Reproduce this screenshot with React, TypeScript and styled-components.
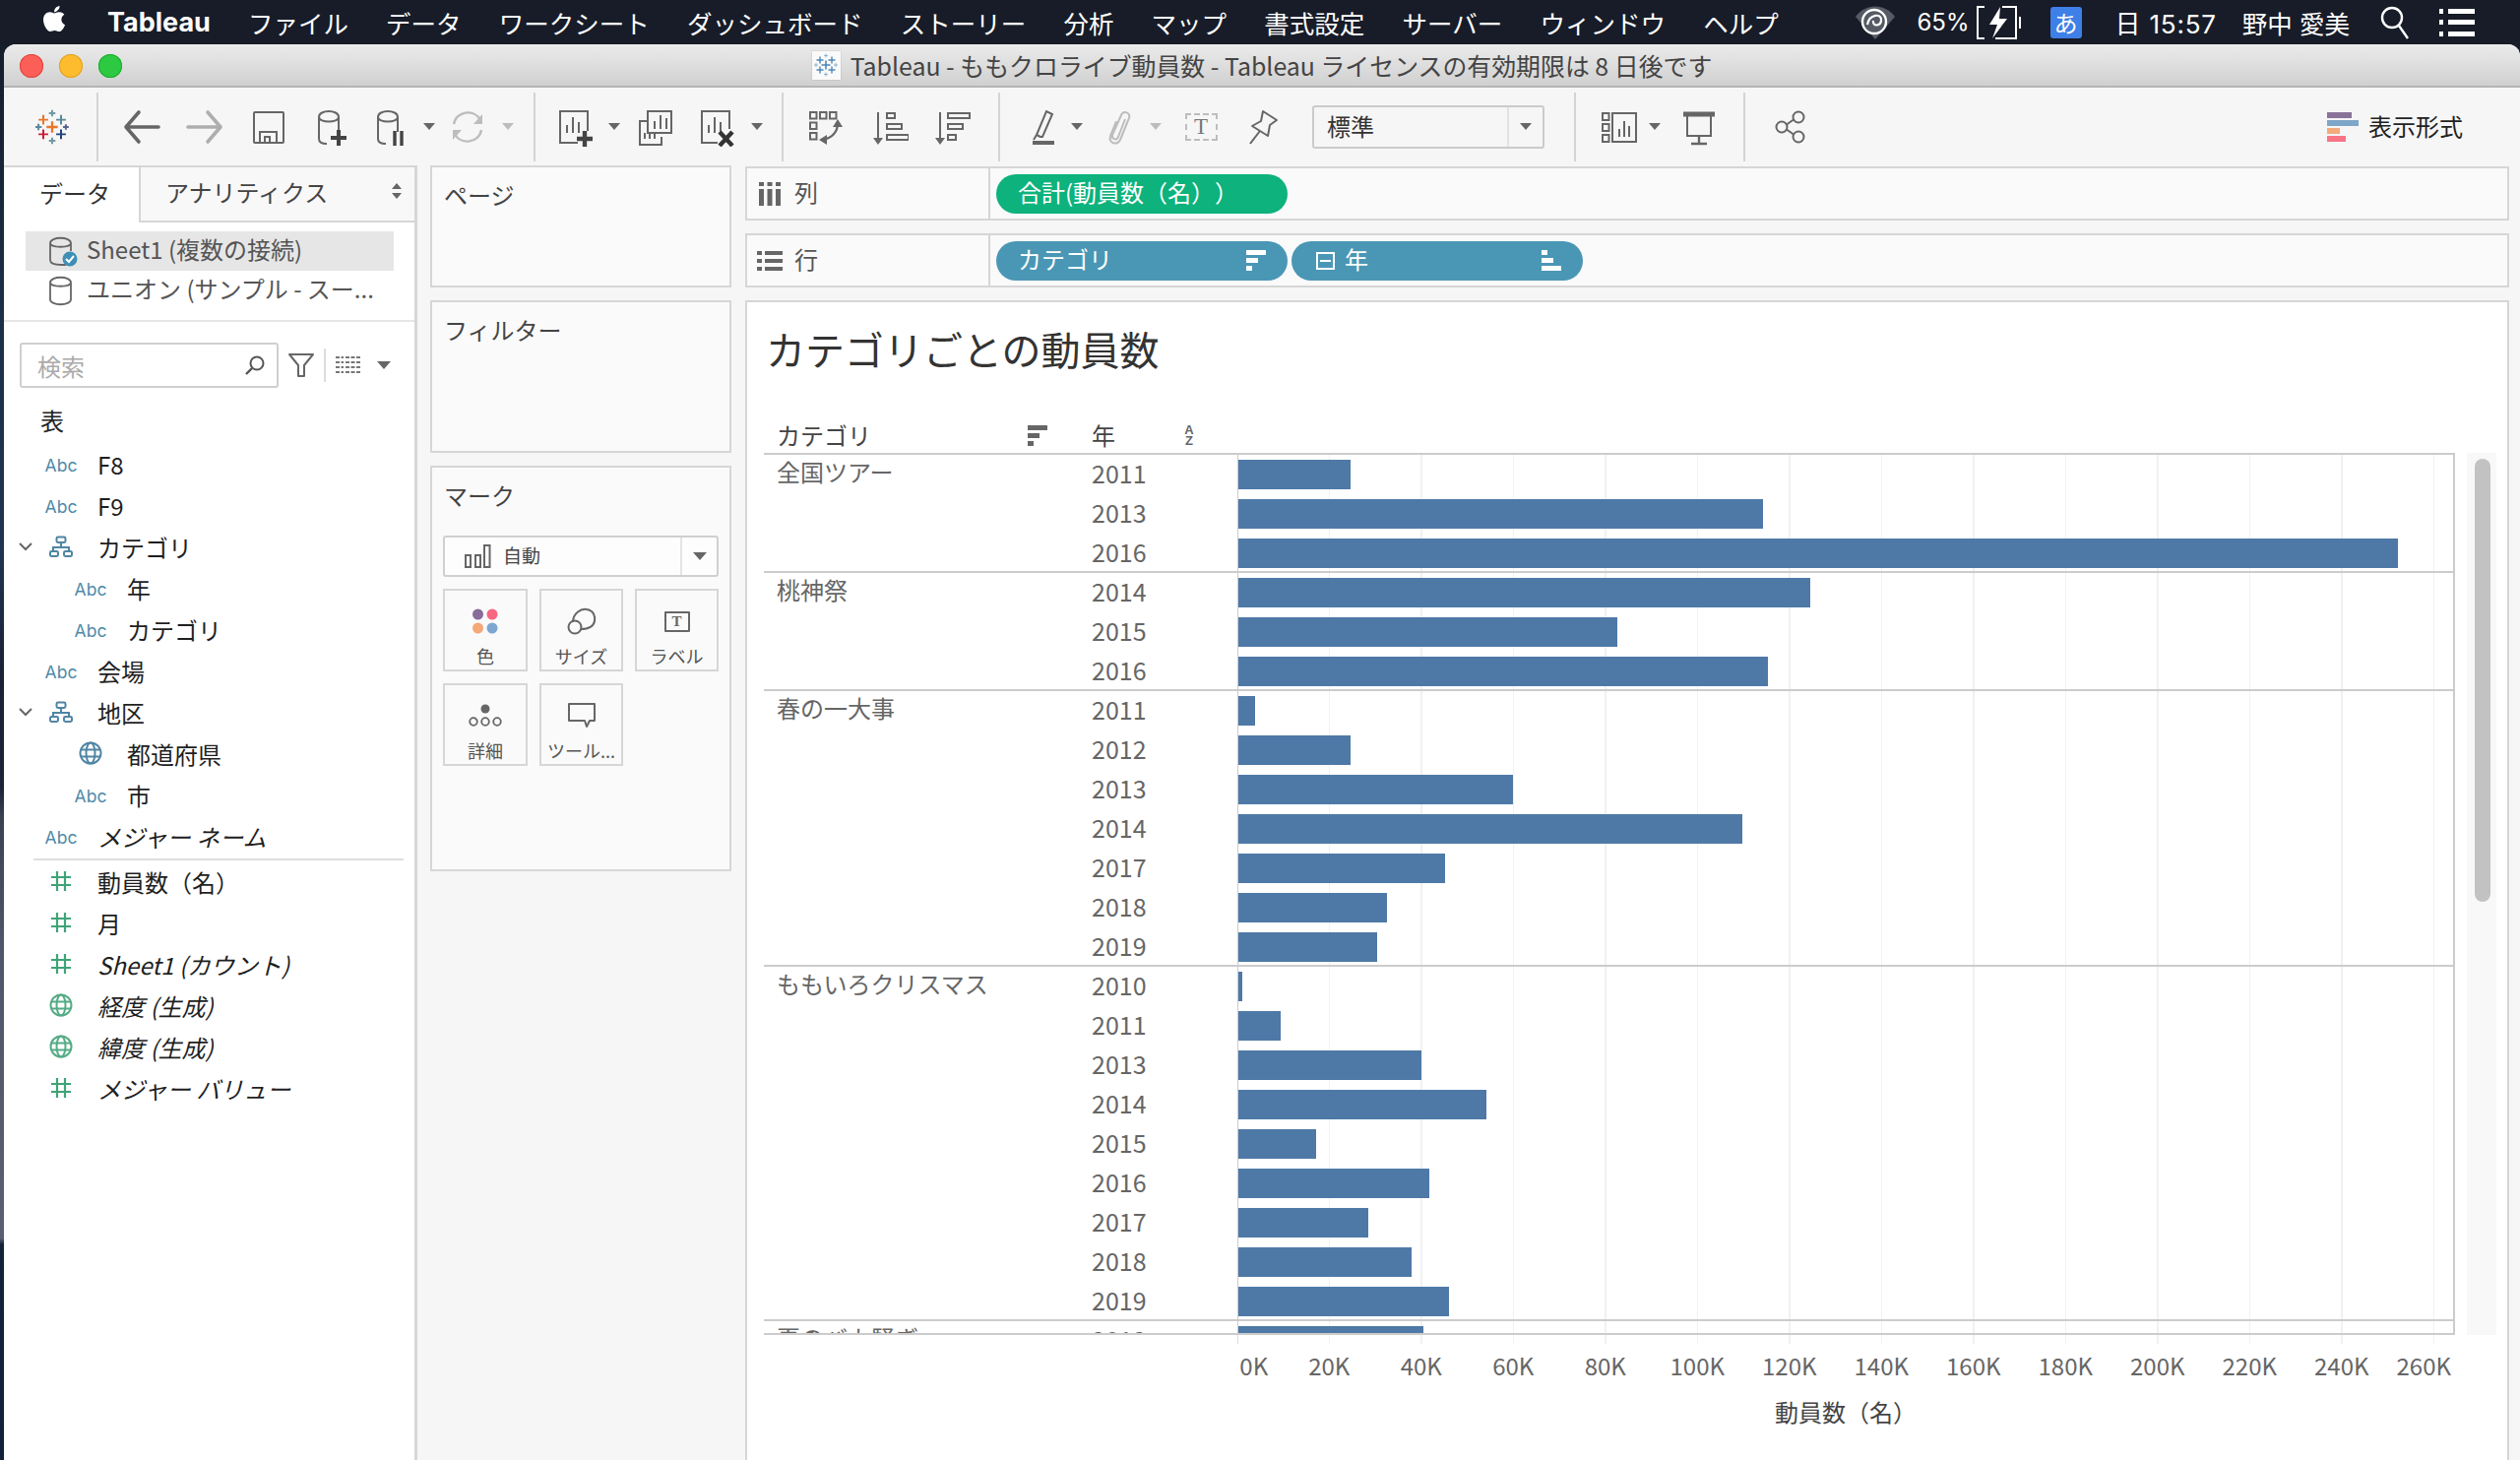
import React from "react";
import styled, { createGlobalStyle } from "styled-components";
import { FaApple } from "react-icons/fa";

const JP = `"Noto Sans CJK JP", "Noto Sans", sans-serif`;
const UI = `Inter, "Noto Sans CJK JP", sans-serif`;

const Global = createGlobalStyle`
  html, body { margin: 0; padding: 0; width: 2560px; height: 1483px; overflow: hidden; }
  body {
    font-family: ${JP};
    background: linear-gradient(180deg, #141a26 0, #1c3048 330px, #1f3450 560px, #1a2035 692px, #1c2238 800px, #3a4250 830px, #50566a 964px, #5a6070 1258px, #142238 1264px, #12203a 1483px);
  }
  #root { width: 2560px; height: 1483px; }
`;

const Page = styled.div`
  width: 2560px; height: 1483px; display: flex; flex-direction: column; overflow: hidden;
`;

/* ---------- menu bar ---------- */
const MenuBar = styled.div`
  height: 45px; flex: none; background: #171c28; color: #fff; display: flex; align-items: center;
  padding-left: 42px; font-family: ${UI}; font-size: 25.5px; box-sizing: border-box;
`;
const AppleSlot = styled.span`display: flex; width: 26px; margin-right: 41px; margin-top: -8px;`;
const AppName = styled.span`font-weight: 700; font-size: 27px; margin-right: 38px;`;
const MenuItem = styled.span`margin-right: 38.2px; white-space: nowrap; font-weight: 400;`;
const Status = styled.div`margin-left: auto; display: flex; align-items: center; padding-right: 46px;`;
const StatusText = styled.span<{ $ml: number; $fs: number; $ls?: number }>`
  margin-left: ${p => p.$ml}px; white-space: nowrap; font-size: ${p => p.$fs}px; letter-spacing: ${p => p.$ls ?? 0}px;
`;
const ImeBadge = styled.span`
  margin-left: 29px; width: 32px; height: 32px; background: #3f7fe8; border-radius: 3px; display: flex;
  align-items: center; justify-content: center; font-size: 24px;
`;
const StatusIcon = styled.svg<{ $ml: number }>`margin-left: ${p => p.$ml}px; flex: none; display: block;`;

/* ---------- window ---------- */
const Win = styled.div`
  margin-left: 4px; flex: 1; min-height: 0; display: flex; flex-direction: column; background: #f6f6f6;
  border-radius: 12px 12px 0 0; overflow: hidden;
`;
const TitleBar = styled.div`
  height: 44px; flex: none; box-sizing: border-box; display: flex; align-items: center; justify-content: center;
  background: linear-gradient(180deg, #ebebeb, #d0d0d0); border-bottom: 2px solid #b4b4b4; position: relative;
`;
const Lights = styled.div`position: absolute; left: 16px; top: 10px; display: flex; gap: 16px;`;
const Light = styled.span<{ $c: string; $b: string }>`
  width: 24px; height: 24px; border-radius: 50%; background: ${p => p.$c}; box-shadow: inset 0 0 0 1px ${p => p.$b};
`;
const TitleText = styled.span`font-size: 24.9px; color: #444; white-space: nowrap; margin-left: 10px;`;
const DocIcon = styled.span`
  width: 29px; height: 29px; background: #fafafa; box-shadow: 0 0 1px #999; display: flex; align-items: center; justify-content: center;
`;

const Toolbar = styled.div`
  height: 79px; flex: none; display: flex; align-items: center; background: #f6f6f6; padding-right: 58px;
`;
const LogoSlot = styled.div`width: 96px; padding-left: 2px; box-sizing: border-box; margin-right: -2px; display: flex; justify-content: center; flex: none;`;
const Sep = styled.span<{ $ml?: number }>`
  width: 2px; height: 70px; background: #d4d4d4; flex: none; margin-left: ${p => p.$ml ?? 0}px;
`;
const Tool = styled.span<{ $ml: number; $w?: number }>`
  width: ${p => p.$w ?? 40}px; height: 40px; flex: none; margin-left: ${p => p.$ml}px; display: flex; align-items: center; justify-content: center;
`;
const Caret = styled.span<{ $off?: boolean; $s?: number }>`
  width: 0; height: 0; border-left: ${p => p.$s ?? 6}px solid transparent; border-right: ${p => p.$s ?? 6}px solid transparent;
  border-top: ${p => (p.$s ?? 6) + 1}px solid ${p => (p.$off ? "#bdbdbd" : "#666")}; display: block;
`;
const FitBox = styled.div`
  width: 236px; height: 44px; margin-left: 31px; flex: none; box-sizing: border-box; border: 2px solid #cbcbcb; border-radius: 3px;
  display: flex; align-items: center; font-size: 24px; color: #333;
`;
const FitText = styled.span`flex: 1; padding: 0 0 3px 13px;`;
const FitArrow = styled.span`
  width: 34px; height: 100%; border-left: 2px solid #e2e2e2; display: flex; align-items: center; justify-content: center;
`;
const ShowMe = styled.div`margin-left: auto; display: flex; align-items: center; gap: 10px; font-size: 24px; color: #222;`;
const ShowMeText = styled.span`margin-top: -3px;`;
const ShowBars = styled.div`display: flex; flex-direction: column; gap: 2px;`;
const ShowBar = styled.span<{ $w: number; $c: string }>`display: block; height: 6px; width: ${p => p.$w}px; background: ${p => p.$c};`;

/* ---------- workspace ---------- */
const Workspace = styled.div`flex: 1; min-height: 0; display: flex; background: #f6f6f6;`;
const Sidebar = styled.div`
  width: 420px; flex: none; box-sizing: border-box; background: #fff; border-top: 2px solid #d6d6d6; border-right: 3px solid #d6d6d6;
  display: flex; flex-direction: column; color: #222;
`;
const Tabs = styled.div`height: 56px; flex: none; display: flex;`;
const TabOn = styled.div`
  width: 139px; box-sizing: border-box; padding: 0 0 6px 36px; font-size: 24px; color: #333; display: flex; align-items: center; border-right: 2px solid #d6d6d6;
`;
const TabOff = styled.div`
  flex: 1; box-sizing: border-box; padding: 0 12px 6px 25px; font-size: 24px; color: #444; background: #f8f8f8; border-bottom: 2px solid #d6d6d6;
  display: flex; align-items: center; justify-content: space-between;
`;
const Sources = styled.div`
  padding: 9px 0 10px; border-bottom: 2px solid #e6e6e6; display: flex; flex-direction: column; height: 101px; box-sizing: border-box; flex: none;
`;
const Source = styled.div<{ $on?: boolean }>`
  margin-left: 22px; width: 374px; height: 40px; flex: none; display: flex; align-items: center; gap: 7px; padding-left: 23px; box-sizing: border-box;
  background: ${p => (p.$on ? "#e6e6e6" : "transparent")}; color: #555; font-size: 24px; white-space: nowrap;
`;
const SourceText = styled.span`margin-top: -5px;`;
const SearchRow = styled.div`display: flex; align-items: center; height: 46px; margin: 21px 0 0 16px; flex: none;`;
const SearchBox = styled.div`
  width: 263px; height: 46px; box-sizing: border-box; border: 2px solid #cfcfcf; border-radius: 3px; padding: 0 10px 0 16px;
  display: flex; align-items: center; justify-content: space-between; color: #aaa; font-size: 24px;
`;
const SearchTools = styled.div`display: flex; align-items: center; margin-left: 9px;`;
const SmallSep = styled.span`width: 2px; height: 34px; background: #ddd; margin: 0 10px 0 9px;`;
const TableHead = styled.div`margin: 15px 0 0 37px; font-size: 24px; height: 36px; line-height: 36px; flex: none; color: #222;`;
const FieldList = styled.div`display: flex; flex-direction: column; margin-top: 5px;`;
const Field = styled.div<{ $sub?: boolean; $it?: boolean }>`
  height: 42px; flex: none; display: grid; grid-template-columns: 42px 53px auto; align-items: center;
  padding-left: ${p => (p.$sub ? 30 : 0)}px; font-size: 24px; font-style: ${p => (p.$it ? "italic" : "normal")}; white-space: nowrap; color: #1f1f1f;
`;
const Chevron = styled.svg`justify-self: end; margin-right: 13px;`;
const FieldIcon = styled.span`display: flex; justify-content: center; width: 42px; margin-left: -5px;`;
const Abc = styled.span`font-family: ${UI}; font-size: 17.5px; color: #4f8aa8; font-style: normal; margin-top: 2px;`;
const FieldRule = styled.div`height: 2px; margin: 2px 0 0 30px; width: 376px; background: #dedede; flex: none;`;

const Cards = styled.div`width: 306px; margin-left: 13px; flex: none; display: flex; flex-direction: column;`;
const Card = styled.div<{ $h: number }>`
  height: ${p => p.$h}px; flex: none; box-sizing: border-box; border: 2px solid #d6d6d6; background: #fafafa; padding: 11px 11px; margin-bottom: 13px;
`;
const CardTitle = styled.div`font-size: 24px; color: #444; height: 34px; line-height: 34px; padding-left: 1px;`;
const MarkSelect = styled.div`
  margin-top: 24px; height: 42px; box-sizing: border-box; border: 2px solid #d0d0d0; border-radius: 3px; display: flex; align-items: center; background: #fff8;
  font-size: 19px; color: #444;
`;
const MarkValue = styled.div`flex: 1; display: flex; align-items: center; gap: 12px; padding-left: 20px;`;
const MarkValueText = styled.span`margin-top: -3px;`;
const MarkArrow = styled.div`width: 35px; height: 100%; border-left: 2px solid #e4e4e4; display: flex; align-items: center; justify-content: center;`;
const MarkGrid = styled.div`margin-top: 12px; display: grid; grid-template-columns: 86px 85px 85px; column-gap: 12px; row-gap: 12px;`;
const MarkCard = styled.div`
  height: 84px; box-sizing: border-box; border: 2px solid #d6d6d6; display: flex; flex-direction: column; align-items: center; justify-content: flex-end;
  padding-bottom: 1px; font-size: 18px; color: #555; gap: 4px; white-space: nowrap;
`;
const MarkIcon = styled.div`height: 36px; display: flex; align-items: center; justify-content: center;`;
const TBox = styled.span`
  width: 26px; height: 21px; box-sizing: border-box; border: 2px solid #666; border-radius: 1px; display: flex; align-items: center; justify-content: center;
  font-family: "Liberation Serif", serif; font-size: 15px; font-weight: 700; color: #666; line-height: 1;
`;

const Right = styled.div`width: 1792px; margin-left: 14px; flex: none; display: flex; flex-direction: column;`;
const Shelf = styled.div`
  height: 55px; flex: none; box-sizing: border-box; border: 2px solid #d6d6d6; background: #fafafa; display: flex; margin-bottom: 13px;
  &:first-child { margin-top: 1px; }
`;
const ShelfLabel = styled.div`
  width: 247px; flex: none; box-sizing: border-box; border-right: 2px solid #d6d6d6; display: flex; align-items: center; padding-left: 12px; gap: 14px;
  font-size: 24px; color: #555;
`;
const ShelfText = styled.span`margin-top: -4px;`;
const ShelfBody = styled.div`display: flex; align-items: center; padding-left: 6px; gap: 4px;`;
const Pill = styled.div<{ $c: string }>`
  width: 296px; height: 40px; box-sizing: border-box; border-radius: 20px; background: ${p => p.$c}; color: #fff; display: flex; align-items: center;
  padding: 0 22px; font-size: 24px; justify-content: space-between; white-space: nowrap; text-spacing-trim: space-all;
`;
const PillText = styled.span`margin-top: -4px;`;
const PillLead = styled.span`display: flex; align-items: center; gap: 10px; margin-left: 3px;`;
const BarsIcon = styled.span<{ $rev?: boolean }>`
  display: flex; flex-direction: ${p => (p.$rev ? "column-reverse" : "column")}; gap: 3px; align-items: flex-start;
`;
const BarsLine = styled.span<{ $w: number; $c: string }>`display: block; height: 5px; width: ${p => p.$w}px; background: ${p => p.$c};`;
const RowsGlyph = styled.svg`margin: 0 -2px; flex: none;`;

const Viz = styled.div`
  flex: 1; min-height: 0; box-sizing: border-box; border: 2px solid #d6d6d6; border-bottom: none; background: #fff; padding: 19px 0 0 17px; display: flex; flex-direction: column;
`;
const VizTitle = styled.div`font-size: 40px; line-height: 56px; color: #333; margin-left: 2px; height: 56px;`;
const HeadRow = styled.div`display: flex; margin-top: 42px; height: 36px; font-size: 24px; color: #444; width: 1718px; line-height: 36px;`;
const HeadCell = styled.div<{ $w: number; $pl: number; $pr: number }>`
  width: ${p => p.$w}px; box-sizing: border-box; padding: 0 ${p => p.$pr}px 0 ${p => p.$pl}px; display: flex; justify-content: space-between; align-items: center;
`;
const ChartRow = styled.div`display: flex; align-items: stretch;`;
const ChartBody = styled.div`
  width: 1718px; height: 896px; box-sizing: border-box; border-top: 2px solid #cccccc; border-bottom: 2px solid #cccccc; border-right: 2px solid #cccccc; overflow: hidden;
  position: relative;
`;
const Group = styled.div<{ $n: number }>`
  display: flex; height: ${p => p.$n * 40}px; box-sizing: border-box; border-bottom: 2px solid #cccccc; flex: none;
`;
const CatLabel = styled.div`width: 333px; flex: none; box-sizing: border-box; padding-left: 13px; font-size: 24px; line-height: 33px; color: #666;`;
const RowsCol = styled.div`flex: 1; display: flex; flex-direction: column;`;
const gridBg = `repeating-linear-gradient(90deg, transparent 0, transparent 92px, #f1f1f1 92px, #f1f1f1 93.5px)`;
const BarRow = styled.div`
  height: 40px; flex: none; display: flex; &:last-child { height: 38px; }
`;
const YearLabel = styled.div`width: 148px; flex: none; font-size: 25px; line-height: 37px; color: #666;`;
const BarCell = styled.div`
  flex: 1; box-sizing: border-box; border-left: 1px solid #cccccc; padding-top: 5px; background: ${gridBg};
`;
const Bar = styled.div`height: 30px; background: #4e79a7;`;
const Scroll = styled.div`margin-left: 12px; width: 30px; height: 896px; background: #f8f8f8; padding: 6px 6px 0 8px; box-sizing: border-box;`;
const Thumb = styled.div`height: 450px; background: #c2c2c2; border-radius: 8px;`;
const TickStrip = styled.div`margin-left: 481px; width: 1236px; height: 9px; box-sizing: border-box; border-left: 1px solid #ddd; background: ${gridBg};`;
const Ticks = styled.div`display: flex; margin-left: 434px; height: 34px; line-height: 34px; margin-top: 5px; font-size: 24px; color: #666;`;
const Tick = styled.span<{ $shift?: number }>`
  width: 93.5px; flex: none; text-align: center; white-space: nowrap; transform: translateX(${p => p.$shift ?? 0}px);
`;
const AxisTitle = styled.div`margin: 13px 0 0 489px; width: 1220px; text-align: center; font-size: 24px; line-height: 34px; color: #444;`;

/* ---------- drawings ---------- */
const C = "#666";
const Cross = ({ x, y, s, c, w = 2.4 }: { x: number; y: number; s: number; c: string; w?: number }) => (
  <path d={`M${x - s} ${y}H${x + s}M${x} ${y - s}V${y + s}`} stroke={c} strokeWidth={w} fill="none" />
);
const Logo = () => (
  <svg width="34" height="36" viewBox="0 0 40 44">
    <Cross x={20} y={22} s={7} c="#e8762b" w={2.8} />
    <Cross x={9} y={13} s={6} c="#e8762b" />
    <Cross x={31} y={13} s={6} c="#5b879b" />
    <Cross x={9} y={31} s={6} c="#c72037" />
    <Cross x={31} y={31} s={6} c="#1f447e" />
    <Cross x={20} y={5} s={4} c="#7199a6" />
    <Cross x={20} y={39} s={4} c="#7099a6" />
    <Cross x={3} y={22} s={4} c="#5b879b" />
    <Cross x={37} y={22} s={3.5} c="#59628c" />
  </svg>
);
const MiniLogo = () => (
  <svg width="24" height="24" viewBox="0 0 24 24">
    <Cross x={12} y={12} s={4.5} c="#4e86b8" w={1.6} />
    <Cross x={6} y={7} s={3.5} c="#4e86b8" w={1.4} />
    <Cross x={18} y={7} s={3.5} c="#4e86b8" w={1.4} />
    <Cross x={6} y={17} s={3.5} c="#4e86b8" w={1.4} />
    <Cross x={18} y={17} s={3.5} c="#4e86b8" w={1.4} />
    <Cross x={12} y={2.5} s={2} c="#8db4d2" w={1} />
    <Cross x={12} y={21.5} s={2} c="#8db4d2" w={1} />
    <Cross x={2} y={12} s={2} c="#8db4d2" w={1} />
    <Cross x={22} y={12} s={2} c="#8db4d2" w={1} />
  </svg>
);
const Svg = ({ children, w = 40, h = 40 }: { children: React.ReactNode; w?: number; h?: number }) => (
  <svg width={w} height={h} viewBox={`0 0 ${w} ${h}`} fill="none" stroke={C} strokeWidth="2">{children}</svg>
);
const Arrow = ({ dir, color }: { dir: "l" | "r"; color: string }) => (
  <svg width="40" height="40" viewBox="0 0 40 40" fill="none" stroke={color} strokeWidth="3.6" strokeLinecap="round" strokeLinejoin="round">
    {dir === "l" ? <path d="M37 20H5M17 5L4 20L17 35" /> : <path d="M3 20H35M23 5L36 20L23 35" />}
  </svg>
);
const SaveIco = () => <Svg><rect x="5" y="5" width="30" height="31" rx="1" /><path d="M11 36V25H28V36M16 36V30H21V36" /></Svg>;
const Cyl = () => <path d="M9 10C9 2 29 2 29 10V25M9 10C9 16 29 16 29 10M9 10V32C9 36 13 37 17 37" />;
const AddDs = () => <Svg><Cyl /><path d="M29 23V39M21 31H37" stroke="#444" strokeWidth="4" /></Svg>;
const PauseDs = () => <Svg><Cyl /><path d="M26 24V39M33 24V39" stroke="#444" strokeWidth="3.4" /></Svg>;
const Refresh = () => (
  <svg width="40" height="40" viewBox="0 0 40 40" fill="none" stroke="#bdbdbd" strokeWidth="2.4">
    <path d="M6 17C8 4 27 1 33 13M34 23C32 36 13 39 7 27" />
    <path d="M35 7V17H26ZM5 33V23H14Z" fill="#bdbdbd" stroke="none" />
  </svg>
);
const SheetBars = () => <path d="M13 26V18M19 26V10M25 26V15" strokeWidth="2" />;
const NewSheet = () => <Svg><path d="M24 36H6V4H34V24" /><SheetBars /><path d="M31 24V40M23 32H39" stroke="#444" strokeWidth="4.4" /></Svg>;
const DupSheet = () => (
  <Svg>
    <path d="M12 4H36V26H12Z" /><path d="M19 22V14M25 22V8M31 22V11" />
    <path d="M12 14H4V38H26V30" /><path d="M9 32V26M14 32V26M19 32V26" />
  </Svg>
);
const ClearSheet = () => <Svg><path d="M22 36H6V4H34V22" /><SheetBars /><path d="M24 25L37 39M37 25L24 39" stroke="#333" strokeWidth="4.4" /></Svg>;
const SwapIco = () => (
  <Svg>
    <rect x="5" y="5" width="6.5" height="6.5" /><rect x="15" y="5" width="6.5" height="6.5" /><rect x="25" y="5" width="6.5" height="6.5" />
    <rect x="5" y="15.5" width="6.5" height="6.5" /><rect x="5" y="26" width="6.5" height="6.5" />
    <path d="M33 16C33 25 27 31 18 33" strokeWidth="2.4" />
    <path d="M33 12L38 20H28ZM14 33L22 28V38Z" fill={C} stroke="none" />
  </Svg>
);
const SortAsc = () => (
  <Svg>
    <path d="M9 5V34" /><path d="M4 31H14L9 38Z" fill={C} stroke="none" />
    <rect x="18" y="6" width="8" height="5" /><rect x="18" y="17" width="15" height="5" /><rect x="18" y="28" width="22" height="5" />
  </Svg>
);
const SortDesc = () => (
  <Svg>
    <path d="M7 5V34" /><path d="M2 31H12L7 38Z" fill={C} stroke="none" />
    <rect x="15" y="6" width="22" height="5" /><rect x="15" y="17" width="15" height="5" /><rect x="15" y="28" width="8" height="5" />
  </Svg>
);
const Highlight = () => (
  <Svg>
    <path d="M17 30L13 28L23 4L29 7L19 30Z" /><path d="M13 28L10 33" />
    <path d="M9 37H31" stroke={C} strokeWidth="4" transform="translate(0 -1)" />
  </Svg>
);
const ClipIco = () => (
  <svg width="40" height="40" viewBox="0 0 40 40" fill="none" stroke="#bdbdbd" strokeWidth="2">
    <path d="M25 12L18 30C17 34 11 33 12 28L21 8C23 3 31 5 29 11L20 33C17 39 8 37 10 29L16 14" />
  </svg>
);
const TDashed = styled.span`
  width: 33px; height: 28px; box-sizing: border-box; border: 2px dashed #bdbdbd; display: flex; align-items: center; justify-content: center;
  font-family: "Liberation Serif", serif; font-size: 23px; color: #777; line-height: 1;
`;
const PinIco = () => (
  <Svg>
    <path d="M21 4L35 13L28 18L26 29L10 19L19 14Z" strokeLinejoin="round" /><path d="M18 24L8 37" />
  </Svg>
);
const ShowIco = () => (
  <Svg>
    <rect x="3" y="6" width="6.5" height="7" /><rect x="3" y="17" width="6.5" height="7" /><rect x="3" y="28" width="6.5" height="7" />
    <rect x="13" y="6" width="24" height="29" /><path d="M20 30V22M25 30V14M30 30V19" />
  </Svg>
);
const Present = () => (
  <Svg>
    <path d="M4 7H36" strokeWidth="5" /><path d="M8 9V29H32V9" /><path d="M20 29V37M12 37H28" strokeWidth="2.4" />
  </Svg>
);
const ShareIco = () => (
  <Svg>
    <circle cx="28" cy="10" r="5.5" /><circle cx="28" cy="30" r="5.5" /><circle cx="11" cy="20" r="5.5" />
    <path d="M16 17.5L23 12.5M16 22.5L23 27.5" />
  </Svg>
);
const CylSmall = ({ ok }: { ok?: boolean }) => (
  <svg width="32" height="32" viewBox="0 0 32 32" fill="none" stroke="#666" strokeWidth="1.8">
    {ok
      ? <path d="M2 8C2 1 23 1 23 8V16M2 8C2 13 23 13 23 8M2 8V25C2 29 6 30 13 30H18" />
      : <path d="M2 8C2 1 23 1 23 8V25C23 32 2 32 2 25ZM2 8C2 13 23 13 23 8" />}
    {ok && <><circle cx="22" cy="24" r="7.5" fill="#3d8fb5" stroke="none" /><path d="M18 24L21 27L26 21" stroke="#fff" strokeWidth="2" /></>}
  </svg>
);
const Updown = () => (
  <svg width="12" height="18" viewBox="0 0 12 18" fill="#666"><path d="M6 1L11 7H1ZM6 17L11 11H1Z" /></svg>
);
const Glass = ({ s = 24 }: { s?: number }) => (
  <svg width={s} height={s} viewBox="0 0 24 24" fill="none" stroke="#555" strokeWidth="2">
    <circle cx="14" cy="10" r="6.5" /><path d="M9 15L3 21" strokeWidth="2.4" />
  </svg>
);
const Funnel = () => (
  <svg width="28" height="28" viewBox="0 0 28 28" fill="none" stroke="#666" strokeWidth="2"><path d="M2 3H26L17 14V25H11V14Z" strokeLinejoin="round" /></svg>
);
const DenseList = () => (
  <svg width="26" height="20" viewBox="0 0 26 20" stroke="#777" strokeWidth="2" strokeDasharray="4 1.5">
    <path d="M0 2H8M10 2H26M0 7H8M10 7H26M0 12H8M10 12H26M0 17H8M10 17H26" />
  </svg>
);
const Hier = () => (
  <svg width="24" height="22" viewBox="0 0 24 22" fill="none" stroke="#4f85a4" strokeWidth="2">
    <rect x="7.5" y="1.500" width="9" height="5.500" rx="1.400" /><path d="M12 7V12M4 16V12H20V16" />
    <rect x="1" y="16" width="8" height="5" rx="1.400" /><rect x="15" y="16" width="8" height="5" rx="1.400" />
  </svg>
);
const Globe = ({ c }: { c: string }) => (
  <svg width="24" height="24" viewBox="0 0 24 24" fill="none" stroke={c} strokeWidth="2">
    <circle cx="12" cy="12" r="10.500" /><ellipse cx="12" cy="12" rx="4.500" ry="10.500" /><path d="M2 8.500H22M2 15.500H22" />
  </svg>
);
const Hash = () => (
  <svg width="22" height="22" viewBox="0 0 22 22" stroke="#3fa377" strokeWidth="2.2"><path d="M7 1V21M15 1V21M1 7H21M1 15H21" /></svg>
);
const ChevronDown = () => (
  <Chevron width="14" height="10" viewBox="0 0 14 10" fill="none" stroke="#666" strokeWidth="2"><path d="M1 2L7 8L13 2" /></Chevron>
);
const AutoBars = () => (
  <svg width="27" height="24" viewBox="0 0 27 24" fill="none" stroke="#666" strokeWidth="2"><rect x="1" y="11" width="5" height="12" /><rect x="11" y="11" width="5" height="12" /><rect x="20" y="1" width="5.500" height="22" /></svg>
);
const Dots4 = () => (
  <svg width="26" height="26" viewBox="0 0 26 26">
    <circle cx="5.500" cy="6" r="5.500" fill="#876d9a" /><circle cx="20" cy="6" r="5.500" fill="#f8677f" />
    <circle cx="5.500" cy="20" r="5.500" fill="#f5a878" /><circle cx="20" cy="20" r="5.500" fill="#7da7d0" />
  </svg>
);
const SizeIco = () => (
  <svg width="30" height="28" viewBox="0 0 30 28" fill="none" stroke="#666" strokeWidth="2">
    <path d="M6 15C6 6 14 1 20 2C27 3 29 9 28 14C27 19 22 22 14 22" /><circle cx="8" cy="20" r="6.500" />
  </svg>
);
const DetailIco = () => (
  <svg width="34" height="26" viewBox="0 0 34 26" fill="none" stroke="#666" strokeWidth="1.800">
    <circle cx="17" cy="6" r="4.500" fill="#666" stroke="none" />
    <circle cx="5" cy="19" r="3.800" /><circle cx="17" cy="19" r="3.800" /><circle cx="29" cy="19" r="3.800" />
  </svg>
);
const TipIco = () => (
  <svg width="30" height="28" viewBox="0 0 30 28" fill="none" stroke="#666" strokeWidth="2"><path d="M2 2H28V19H23L20 25L18 19H2Z" strokeLinejoin="round" /></svg>
);
const IiiIco = () => (
  <svg width="22" height="26" viewBox="0 0 22 26" fill="#666">
    <path d="M0 1H5V5H0ZM8.500 1H13.500V5H8.500ZM17 1H22V5H17ZM0 8H5V25H0ZM8.500 8H13.500V25H8.500ZM17 8H22V25H17Z" />
  </svg>
);
const RowsIco = () => (
  <RowsGlyph width="26" height="22" viewBox="0 0 26 22" fill="#666"><path d="M0 1H5V5H0ZM8 1H26V5H8ZM0 9H5V13H0ZM8 9H26V13H8ZM0 17H5V21H0ZM8 17H26V21H8Z" /></RowsGlyph>
);
const DateBox = () => (
  <svg width="19" height="18" viewBox="0 0 19 18" fill="none" stroke="#fff" strokeWidth="2"><rect x="1" y="1" width="17" height="16" /><path d="M4 9H15" /></svg>
);
const SortBars = ({ rev }: { rev?: boolean }) => (
  <BarsIcon $rev={rev}>
    <BarsLine $w={20} $c="#fff" /><BarsLine $w={12} $c="#fff" /><BarsLine $w={6} $c="#fff" />
  </BarsIcon>
);
const HeadSort = () => (
  <BarsIcon>
    <BarsLine $w={20} $c="#666" /><BarsLine $w={12} $c="#666" /><BarsLine $w={6} $c="#666" />
  </BarsIcon>
);
const AzText = styled.span`
  display: flex; flex-direction: column; font-family: "Liberation Sans", sans-serif; font-weight: 700; font-size: 13px; line-height: 11px; color: #666; width: 10px; text-align: center; align-items: center;
`;
const WifiIco = () => (
  <StatusIcon $ml={0} width="40" height="34" viewBox="0 0 40 34" fill="none">
    <path d="M0 11C10 -3 30 -3 40 11L20 34Z" fill="#555a64" />
    <circle cx="19" cy="16" r="12" stroke="#fff" strokeWidth="2.400" />
    <path d="M12 19C14 8 27 7 26 15C25 21 17 21 18 15" stroke="#fff" strokeWidth="2.200" />
  </StatusIcon>
);
const Battery = () => (
  <StatusIcon $ml={7} width="46" height="36" viewBox="0 0 46 36" fill="none" stroke="#fff" strokeWidth="2">
    <path d="M8 2H1V34H8M26 2H40V34H19" /><path d="M44 12V24" />
    <path d="M24 2L13 20H21L16 34L31 14H23Z" fill="#fff" stroke="none" />
  </StatusIcon>
);
const ListGlyph = () => (
  <StatusIcon $ml={30} width="36" height="32" viewBox="0 0 36 32" fill="#fff">
    <path d="M0 2H4V7H0ZM9 2H36V7H9ZM0 13H4V18H0ZM9 13H36V18H9ZM0 25H4V30H0ZM9 25H36V30H9Z" />
  </StatusIcon>
);
const WhiteGlass = () => (
  <StatusIcon $ml={31} width="30" height="36" viewBox="0 0 30 36" fill="none" stroke="#fff" strokeWidth="2.400">
    <circle cx="12" cy="13" r="10" /><path d="M19 21L28 34" />
  </StatusIcon>
);

/* ---------- data ---------- */
const menus = ["ファイル", "データ", "ワークシート", "ダッシュボード", "ストーリー", "分析", "マップ", "書式設定", "サーバー", "ウィンドウ", "ヘルプ"];
const ZERO = 1258;
const groups: { name: string; rows: [number, number][] }[] = [
  { name: "全国ツアー", rows: [[2011, 1372], [2013, 1791], [2016, 2436]] },
  { name: "桃神祭", rows: [[2014, 1839], [2015, 1643], [2016, 1796]] },
  { name: "春の一大事", rows: [[2011, 1275], [2012, 1372], [2013, 1537], [2014, 1770], [2017, 1468], [2018, 1409], [2019, 1399]] },
  { name: "ももいろクリスマス", rows: [[2010, 1262], [2011, 1301], [2013, 1444], [2014, 1510], [2015, 1337], [2016, 1452], [2017, 1390], [2018, 1434], [2019, 1472]] },
  { name: "夏のバカ騒ぎ", rows: [[2012, 1446]] },
];
const ticks = ["0K", "20K", "40K", "60K", "80K", "100K", "120K", "140K", "160K", "180K", "200K", "220K", "240K", "260K"];

type F = { label: string; kind: "abc" | "hier" | "globeB" | "globeG" | "hash"; sub?: boolean; it?: boolean; open?: boolean };
const dims: F[] = [
  { label: "F8", kind: "abc" }, { label: "F9", kind: "abc" },
  { label: "カテゴリ", kind: "hier", open: true },
  { label: "年", kind: "abc", sub: true }, { label: "カテゴリ", kind: "abc", sub: true },
  { label: "会場", kind: "abc" },
  { label: "地区", kind: "hier", open: true },
  { label: "都道府県", kind: "globeB", sub: true }, { label: "市", kind: "abc", sub: true },
  { label: "メジャー ネーム", kind: "abc", it: true },
];
const meas: F[] = [
  { label: "動員数（名）", kind: "hash" }, { label: "月", kind: "hash" },
  { label: "Sheet1 (カウント)", kind: "hash", it: true },
  { label: "経度 (生成)", kind: "globeG", it: true }, { label: "緯度 (生成)", kind: "globeG", it: true },
  { label: "メジャー バリュー", kind: "hash", it: true },
];
const FieldRow = ({ f }: { f: F }) => (
  <Field $sub={f.sub} $it={f.it}>
    {f.open ? <ChevronDown /> : <span />}
    <FieldIcon>
      {f.kind === "abc" && <Abc>Abc</Abc>}
      {f.kind === "hier" && <Hier />}
      {f.kind === "globeB" && <Globe c="#4f85a4" />}
      {f.kind === "globeG" && <Globe c="#55ab85" />}
      {f.kind === "hash" && <Hash />}
    </FieldIcon>
    <span>{f.label}</span>
  </Field>
);

export default function App() {
  return (
    <Page>
      <Global />
      <MenuBar>
        <AppleSlot><FaApple size={30} /></AppleSlot>
        <AppName>Tableau</AppName>
        {menus.map(m => <MenuItem key={m}>{m}</MenuItem>)}
        <Status>
          <WifiIco />
          <StatusText $ml={22} $fs={24}>65%</StatusText>
          <Battery />
          <ImeBadge>あ</ImeBadge>
          <StatusText $ml={34} $fs={26} $ls={0.8}>日 15:57</StatusText>
          <StatusText $ml={26} $fs={25.5}>野中 愛美</StatusText>
          <WhiteGlass />
          <ListGlyph />
        </Status>
      </MenuBar>
      <Win>
        <TitleBar>
          <Lights>
            <Light $c="#fc5f57" $b="#e0443e" /><Light $c="#fdbc2e" $b="#dea123" /><Light $c="#2dc942" $b="#1aab29" />
          </Lights>
          <DocIcon><MiniLogo /></DocIcon>
          <TitleText>Tableau - ももクロライブ動員数 - Tableau ライセンスの有効期限は 8 日後です</TitleText>
        </TitleBar>
        <Toolbar>
          <LogoSlot><Logo /></LogoSlot>
          <Sep />
          <Tool $ml={24}><Arrow dir="l" color="#666" /></Tool>
          <Tool $ml={24}><Arrow dir="r" color="#aeaeae" /></Tool>
          <Tool $ml={25}><SaveIco /></Tool>
          <Tool $ml={22}><AddDs /></Tool>
          <Tool $ml={20}><PauseDs /></Tool>
          <Tool $ml={13} $w={16}><Caret /></Tool>
          <Tool $ml={11}><Refresh /></Tool>
          <Tool $ml={13} $w={16}><Caret $off /></Tool>
          <Sep $ml={18} />
          <Tool $ml={19}><NewSheet /></Tool>
          <Tool $ml={13} $w={16}><Caret /></Tool>
          <Tool $ml={14}><DupSheet /></Tool>
          <Tool $ml={21}><ClearSheet /></Tool>
          <Tool $ml={14} $w={16}><Caret /></Tool>
          <Sep $ml={17} />
          <Tool $ml={22}><SwapIco /></Tool>
          <Tool $ml={25}><SortAsc /></Tool>
          <Tool $ml={25}><SortDesc /></Tool>
          <Sep $ml={26} />
          <Tool $ml={24}><Highlight /></Tool>
          <Tool $ml={6} $w={16}><Caret /></Tool>
          <Tool $ml={16}><ClipIco /></Tool>
          <Tool $ml={8} $w={16}><Caret $off /></Tool>
          <Tool $ml={18}><TDashed>T</TDashed></Tool>
          <Tool $ml={22}><PinIco /></Tool>
          <FitBox>
            <FitText>標準</FitText>
            <FitArrow><Caret /></FitArrow>
          </FitBox>
          <Sep $ml={30} />
          <Tool $ml={24}><ShowIco /></Tool>
          <Tool $ml={8} $w={16}><Caret /></Tool>
          <Tool $ml={17}><Present /></Tool>
          <Sep $ml={25} />
          <Tool $ml={26}><ShareIco /></Tool>
          <ShowMe>
            <ShowBars>
              <ShowBar $w={25} $c="#8a739a" /><ShowBar $w={32} $c="#7ea6c9" /><ShowBar $w={13} $c="#f4ab7c" /><ShowBar $w={19} $c="#f97585" />
            </ShowBars>
            <ShowMeText>表示形式</ShowMeText>
          </ShowMe>
        </Toolbar>
        <Workspace>
          <Sidebar>
            <Tabs>
              <TabOn>データ</TabOn>
              <TabOff><span>アナリティクス</span><Updown /></TabOff>
            </Tabs>
            <Sources>
              <Source $on><CylSmall ok /><SourceText>Sheet1 (複数の接続)</SourceText></Source>
              <Source><CylSmall /><SourceText>ユニオン (サンプル - スー...</SourceText></Source>
            </Sources>
            <SearchRow>
              <SearchBox><span>検索</span><Glass /></SearchBox>
              <SearchTools>
                <Funnel /><SmallSep /><DenseList />
                <Tool $ml={12} $w={22}><Caret $s={7} /></Tool>
              </SearchTools>
            </SearchRow>
            <TableHead>表</TableHead>
            <FieldList>
              {dims.map((f, i) => <FieldRow key={i} f={f} />)}
              <FieldRule />
              {meas.map((f, i) => <FieldRow key={i} f={f} />)}
            </FieldList>
          </Sidebar>
          <Cards>
            <Card $h={124}><CardTitle>ページ</CardTitle></Card>
            <Card $h={155}><CardTitle>フィルター</CardTitle></Card>
            <Card $h={412}>
              <CardTitle>マーク</CardTitle>
              <MarkSelect>
                <MarkValue><AutoBars /><MarkValueText>自動</MarkValueText></MarkValue>
                <MarkArrow><Caret $s={7} /></MarkArrow>
              </MarkSelect>
              <MarkGrid>
                <MarkCard><MarkIcon><Dots4 /></MarkIcon><span>色</span></MarkCard>
                <MarkCard><MarkIcon><SizeIco /></MarkIcon><span>サイズ</span></MarkCard>
                <MarkCard><MarkIcon><TBox>T</TBox></MarkIcon><span>ラベル</span></MarkCard>
                <MarkCard><MarkIcon><DetailIco /></MarkIcon><span>詳細</span></MarkCard>
                <MarkCard><MarkIcon><TipIco /></MarkIcon><span>ツール...</span></MarkCard>
              </MarkGrid>
            </Card>
          </Cards>
          <Right>
            <Shelf>
              <ShelfLabel><IiiIco /><ShelfText>列</ShelfText></ShelfLabel>
              <ShelfBody><Pill $c="#0db27c"><PillText>合計(動員数（名））</PillText></Pill></ShelfBody>
            </Shelf>
            <Shelf>
              <ShelfLabel><RowsIco /><ShelfText>行</ShelfText></ShelfLabel>
              <ShelfBody>
                <Pill $c="#4a97b5"><PillText>カテゴリ</PillText><SortBars /></Pill>
                <Pill $c="#4a97b5"><PillLead><DateBox /><PillText>年</PillText></PillLead><SortBars rev /></Pill>
              </ShelfBody>
            </Shelf>
            <Viz>
              <VizTitle>カテゴリごとの動員数</VizTitle>
              <HeadRow>
                <HeadCell $w={333} $pl={13} $pr={45}><span>カテゴリ</span><HeadSort /></HeadCell>
                <HeadCell $w={148} $pl={0} $pr={44}><span>年</span><AzText><span>A</span><span>Z</span></AzText></HeadCell>
              </HeadRow>
              <ChartRow>
                <ChartBody>
                  {groups.map(g => (
                    <Group key={g.name} $n={g.rows.length}>
                      <CatLabel>{g.name}</CatLabel>
                      <RowsCol>
                        {g.rows.map(([y, right]) => (
                          <BarRow key={y}>
                            <YearLabel>{y}</YearLabel>
                            <BarCell><Bar style={{ width: right - ZERO }} /></BarCell>
                          </BarRow>
                        ))}
                      </RowsCol>
                    </Group>
                  ))}
                </ChartBody>
                <Scroll><Thumb /></Scroll>
              </ChartRow>
              <TickStrip />
              <Ticks>
                {ticks.map((t, i) => <Tick key={t} $shift={i === 0 ? 17 : i === 13 ? -10 : 0}>{t}</Tick>)}
              </Ticks>
              <AxisTitle>動員数（名）</AxisTitle>
            </Viz>
          </Right>
        </Workspace>
      </Win>
    </Page>
  );
}
